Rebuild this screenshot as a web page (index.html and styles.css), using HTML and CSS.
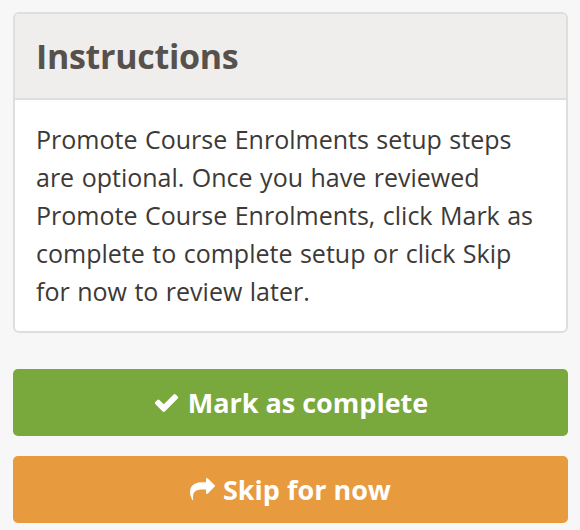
FILE: index.html
```html
<!DOCTYPE html>
<html>
<head>
<meta charset="utf-8">
<link rel="stylesheet" href="styles.css">
</head>
<body>
<div class="wrap">
  <section class="panel">
    <header class="panel-head"><h2 class="title">Instructions</h2></header>
    <div class="panel-body">
      <p class="text">Promote Course Enrolments setup steps are optional. Once you have reviewed Promote Course Enrolments, click Mark as complete to complete setup or click Skip for now to review later.</p>
    </div>
  </section>
  <button class="btn btn-green"><svg class="ico" viewBox="0 0 1792 1792" width="27" height="27"><path fill="#fff" d="M1671 566q0 40-28 68l-724 724-136 136q-28 28-68 28t-68-28l-136-136-362-362q-28-28-28-68t28-68l136-136q28-28 68-28t68 28l294 295 656-657q28-28 68-28t68 28l136 136q28 28 28 68z"/></svg><span>Mark as complete</span></button>
  <button class="btn btn-orange"><svg class="ico" viewBox="0 0 1792 1792" width="25" height="25"><path fill="#fff" d="M1792 640q0 26-19 45l-512 512q-19 19-45 19t-45-19-19-45v-256h-224q-98 0-175.5 6t-154 21.5-133 42.5-105.5 69.5-80 101-48.5 138.5-17.5 181q0 55 5 123 0 6 2.5 23.5t2.5 26.5q0 15-8.5 25t-23.5 10q-16 0-28-17-7-9-13-22t-13.5-30-10.5-24q-127-285-127-451 0-199 53-333 162-403 875-403h224v-256q0-26 19-45t45-19 45 19l512 512q19 19 19 45z"/></svg><span>Skip for now</span></button>
</div>
</body>
</html>
```
FILE: styles.css
```css
html, body { margin: 0; padding: 0; }
body {
  background: #f7f7f7;
  font-family: "Open Sans", "Noto Sans", sans-serif;
  width: 580px;
  height: 530px;
  overflow: hidden;
}
.wrap {
  padding: 12px 12px 0 13px;
  display: flex;
  flex-direction: column;
}
.panel {
  background: #fff;
  border: 2px solid #dfdedc;
  border-radius: 6px;
  overflow: hidden;
}
.panel-head {
  background: #efeeec;
  border-bottom: 2px solid #dfdedc;
  height: 84px;
  display: flex;
  align-items: center;
  padding: 0 21px;
}
.title {
  margin: 0;
  font-size: 34px;
  font-weight: 700;
  color: #57514d;
  letter-spacing: -0.3px;
}
.panel-body {
  padding: 20px 21px 21px;
}
.text {
  margin: 0;
  font-size: 25px;
  word-spacing: 1px;
  line-height: 38px;
  color: #3d3936;
}
.btn {
  height: 67px;
  border: 0;
  border-radius: 5px;
  color: #fff;
  font-family: inherit;
  font-size: 27px;
  font-weight: 700;
  display: flex;
  align-items: center;
  justify-content: center;
  gap: 8px;
  padding: 0;
}
.btn-green { background: #79a83d; margin-top: 36px; }
.btn-orange { background: #e89a3f; margin-top: 20px; }
.ico { display: block; }
```
